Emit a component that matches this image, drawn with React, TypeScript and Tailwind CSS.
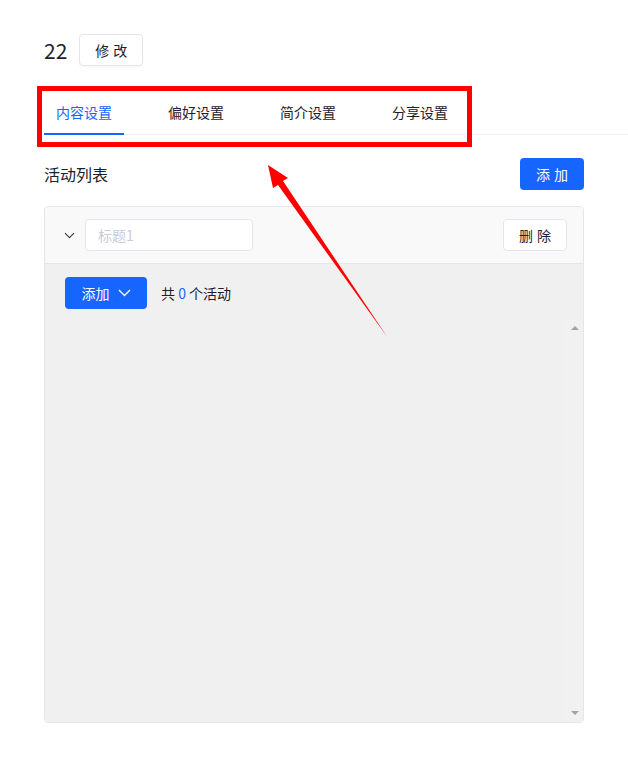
import { ChevronDown } from "lucide-react";

const tabs = ["内容设置", "偏好设置", "简介设置", "分享设置"];

function Scrollbar() {
  return (
    <div className="w-[17px] flex flex-col items-center justify-between bg-[#f1f1f1] py-[6px]">
      <div className="w-0 h-0 border-x-[4px] border-x-transparent border-b-[4px] border-b-[#a3a3a3]" />
      <div className="w-0 h-0 border-x-[4px] border-x-transparent border-t-[4px] border-t-[#a3a3a3]" />
    </div>
  );
}

export default function App() {
  return (
    <div
      className="relative w-[628px] h-[766px] bg-white text-[#1d2129] overflow-hidden"
      style={{ fontFamily: '"Noto Sans CJK SC", "Noto Sans", sans-serif' }}
    >
      <div className="pl-[44px] pr-[44px] pt-[34px]">
        {/* Header */}
        <div className="flex items-center gap-3 h-8">
          <span className="text-[21px] leading-none">22</span>
          <button className="h-8 w-16 rounded border border-[#e5e6eb] bg-white text-[14px] tracking-[4px] pl-[4px] shadow-[0_1px_2px_rgba(0,0,0,0.04)]">
            修改
          </button>
        </div>

        {/* Tabs */}
        <div className="mt-[23px] mr-[-44px] flex gap-8 border-b border-[#f0f0f0]">
          {tabs.map((t, i) => (
            <div
              key={t}
              className={`px-3 pt-3 pb-[10px] text-[14px] leading-[22px] mb-[-1px] border-b-2 ${
                i === 0 ? "text-[#1765ff] border-[#1765ff]" : "border-transparent"
              }`}
            >
              {t}
            </div>
          ))}
        </div>

        {/* Activity list */}
        <div className="mt-[23px] flex items-center justify-between h-8">
          <span className="text-[16px]">活动列表</span>
          <button className="h-8 w-16 rounded bg-[#1765ff] text-white text-[14px] tracking-[4px] pl-[4px]">添加</button>
        </div>

        <div className="mt-4 h-[517px] border border-[#e5e6eb] rounded-sm flex flex-col overflow-hidden">
          <div className="bg-[#f9f9fa] border-b border-[#e5e6eb] flex items-center pl-4 pr-4 py-3">
            <ChevronDown size={17} strokeWidth={1.5} className="text-[#333]" />
            <input
              placeholder="标题1"
              className="ml-[7px] w-[168px] h-8 rounded border border-[#e5e6eb] bg-white px-3 text-[14px] placeholder-[#c9cdd4] outline-none"
            />
            <div className="flex-1" />
            <button className="h-8 w-16 rounded border border-[#e5e6eb] bg-white text-[14px] tracking-[4px] pl-[4px]">删除</button>
          </div>
          <div className="flex-1 bg-[#f0f0f0] flex flex-col">
            <div className="flex items-center pl-5 pt-[13px]">
              <button className="h-8 w-[82px] rounded bg-[#1765ff] text-white text-[14px] flex items-center justify-center gap-[8px]">
                添加
                <svg width="13" height="8" viewBox="0 0 13 8" fill="none">
                  <polyline points="1,1 6.5,6.5 12,1" stroke="white" strokeWidth="1.4" />
                </svg>
              </button>
              <span className="ml-[14px] text-[14px]">
                共 <span className="text-[#1765ff]">0</span> 个活动
              </span>
            </div>
            <div className="flex-1 flex mt-[11px] mb-[1px]">
              <div className="flex-1" />
              <Scrollbar />
            </div>
          </div>
        </div>
      </div>

      {/* Annotation overlay */}
      <div className="absolute left-[37px] top-[86px] w-[435px] h-[61px] border-[5px] border-[#ff0000] pointer-events-none" />
      <svg className="absolute left-0 top-0 pointer-events-none" width="628" height="766">
        <polygon
          points="268,165 288,178 283,181 388,338 278,185 273,188"
          fill="#ff0000"
        />
      </svg>
    </div>
  );
}
